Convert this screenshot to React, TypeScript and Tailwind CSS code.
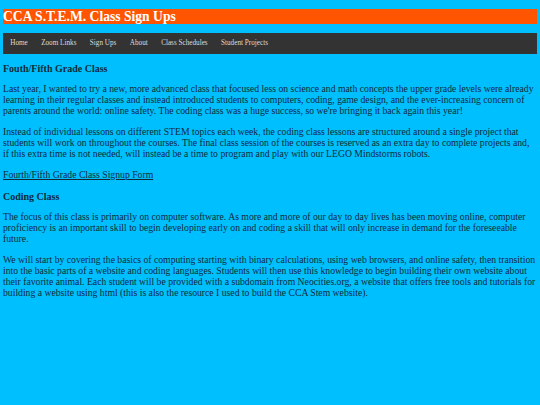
const navItems = [
  "Home",
  "Zoom Links",
  "Sign Ups",
  "About",
  "Class Schedules",
  "Student Projects",
];

export default function App() {
  return (
    <div className="min-h-screen bg-[#00bfff] px-[3px] pt-[9px] font-['Liberation_Serif',serif] text-[#102a3a]">
      <header className="h-[15px] bg-[#ff5500] text-[13.6px] font-bold leading-[15px] text-white">
        CCA S.T.E.M. Class Sign Ups
      </header>

      <nav className="mt-[9px] flex h-[21px] items-center bg-[#333333] pl-[0.5px]">
        {navItems.map((item) => (
          <a key={item} href="#" className="px-[6.7px] text-[7.2px] text-[#dddddd]">
            {item}
          </a>
        ))}
      </nav>

      <main className="mt-[9px] pr-[1px] text-[9.7px] leading-[11px]">
        <h2 className="text-[10px] font-bold leading-[11px]">Fouth/Fifth Grade Class</h2>
        <p className="mt-[9px]">
          Last year, I wanted to try a new, more advanced class that focused less on science and
          math concepts the upper grade levels were already learning in their regular classes and
          instead introduced students to computers, coding, game design, and the ever-increasing
          concern of parents around the world: online safety. The coding class was a huge success,
          so we're bringing it back again this year!
        </p>
        <p className="mt-[10px] pr-[3px]">
          Instead of individual lessons on different STEM topics each week, the coding class
          lessons are structured around a single project that students will work on throughout the
          courses. The final class session of the courses is reserved as an extra day to complete
          projects and, if this extra time is not needed, will instead be a time to program and play
          with our LEGO Mindstorms robots.
        </p>
        <p className="mt-[10px]">
          <a href="#" className="underline">
            Fourth/Fifth Grade Class Signup Form
          </a>
        </p>

        <h2 className="mt-[11px] text-[10px] font-bold leading-[11px]">Coding Class</h2>
        <p className="mt-[9px]">
          The focus of this class is primarily on computer software. As more and more of our day to
          day lives has been moving online, computer proficiency is an important skill to begin
          developing early on and coding a skill that will only increase in demand for the
          foreseeable future.
        </p>
        <p className="mt-[10px]">
          We will start by covering the basics of computing starting with binary calculations, using
          web browsers, and online safety, then transition into the basic parts of a website and
          coding languages. Students will then use this knowledge to begin building their own website
          about their favorite animal. Each student will be provided with a subdomain from
          Neocities.org, a website that offers free tools and tutorials for building a website using
          html (this is also the resource I used to build the CCA Stem website).
        </p>
      </main>
    </div>
  );
}
